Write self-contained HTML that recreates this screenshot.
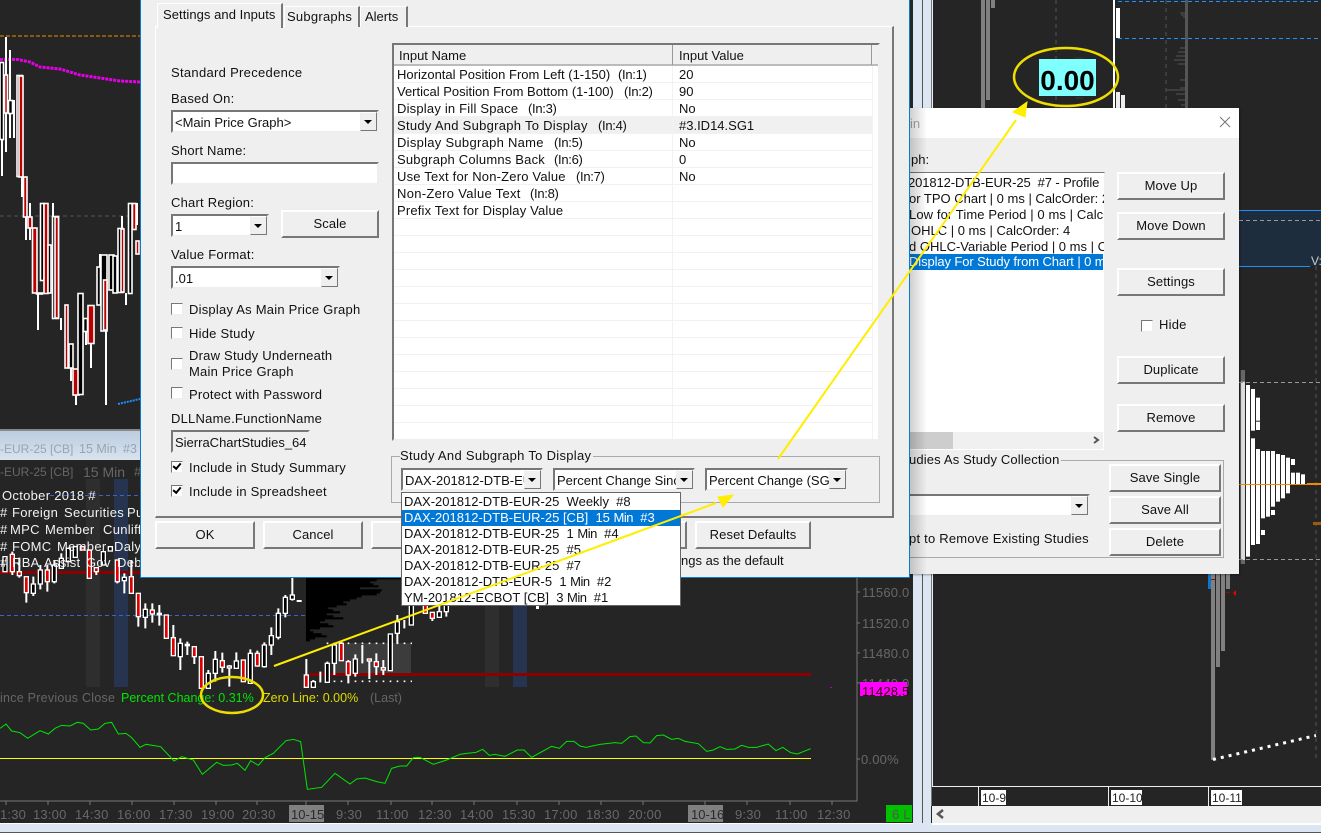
<!DOCTYPE html>
<html><head><meta charset="utf-8"><style>
html,body{margin:0;padding:0;width:1321px;height:833px;overflow:hidden;background:#252525}
body{position:relative;font:13px/16px "Liberation Sans",sans-serif;color:#111}
.a{position:absolute}
.t{position:absolute;white-space:pre;line-height:16px;margin-top:1px}
.s{letter-spacing:.22px}
.n{letter-spacing:-.3px}
svg{position:absolute;left:0;top:0}
.d{background:#efefef}
.b{position:absolute;box-sizing:border-box;background:#efefef;border:2px solid;border-color:#fff #777 #777 #fff;text-align:center;line-height:24px;white-space:pre;letter-spacing:.1px}
.c{position:absolute;box-sizing:border-box;background:#fff;border:2px solid;border-color:#777 #eee #eee #777;line-height:21px;padding-left:2px;white-space:pre;overflow:hidden}
.ar{position:absolute;right:0;top:0;bottom:0;width:17px;box-sizing:border-box;background:#efefef;border:1px solid;border-color:#fff #777 #777 #eee}
.ar:after{content:"";position:absolute;left:3px;top:7px;border:4px solid transparent;border-top:4px solid #000;border-bottom:0}
.k{position:absolute;box-sizing:border-box;width:12px;height:12px;background:#fff;border:1px solid;border-color:#777 #eee #eee #777;left:171px}
.k.on:after{content:"";position:absolute;left:1px;top:1px;width:6px;height:3px;border:solid #000;border-width:0 0 2px 2px;transform:rotate(-50deg)}
.l{position:absolute;white-space:pre;color:#686868;font-size:13px;line-height:16px;letter-spacing:.2px;margin-top:1px}
.ch{position:absolute;white-space:pre;color:#f2f2f2;font-size:13px;line-height:16px;letter-spacing:.3px}
.it{position:absolute;left:2px;white-space:pre;line-height:16px}
.m{letter-spacing:-.5px}
.h{position:absolute;white-space:pre;line-height:16px;font-size:12.5px;margin-top:1px}
</style></head><body>

<svg width="1321" height="833" viewBox="0 0 1321 833">
<!-- frames -->
<rect x="913" y="0" width="9" height="833" fill="#dbe6f2"/>
<rect x="922" y="0" width="1" height="833" fill="#555"/>
<rect x="923" y="0" width="8" height="833" fill="#dbe6f2"/>
<rect x="931" y="0" width="1" height="806" fill="#777"/>
<rect x="932" y="0" width="1" height="786" fill="#eee"/>
<rect x="0" y="823" width="1321" height="9" fill="#dbe6f2"/>
<rect x="0" y="823" width="913" height="1" fill="#fff"/>
<rect x="0" y="832" width="1321" height="1" fill="#555"/>
<rect x="932" y="806" width="389" height="17" fill="#efefef"/>
<rect x="932" y="823" width="389" height="2" fill="#fff"/>
<path d="M943 810l-5 4 5 4" fill="none" stroke="#555" stroke-width="2.500"/>

<!-- upper chart -->
<path d="M0 36H140" stroke="#f28a00" stroke-dasharray="4 2"/>
<path d="M0 216H140" stroke="#555" stroke-dasharray="4 3"/>
<path d="M0 59.5H18L30 62 40 67 60 69 80 75 100 78 120 81 140 82" fill="none" stroke="#e600e6" stroke-width="3" stroke-dasharray="3 1"/>
<path d="M118 404L140 399" stroke="#1e90ff" stroke-width="2" stroke-dasharray="2 1"/>
<g fill="none" stroke="#fff" stroke-width="1.6">
<path d="M2 140V176M6 37V75M6 113V152M10 50V100M10 113V138M14 100V138M22 177V197M26 217V240M30 203V217M30 228V240M53 203V216M38 293V330M61 318V330M71 368V381M76 395V405M86 331V345M91 343V368M106 331V405M100 254V267M122 216V256M126 293V305M137 203V225" stroke-width="2"/>
<rect x="0" y="62.5" width="3.5" height="77" fill="#000"/>
<rect x="4.5" y="75" width="3" height="38" fill="#b00"/>
<rect x="8.5" y="100.5" width="4" height="13" fill="#000"/>
<rect x="17" y="75.5" width="5.500" height="101" fill="#000"/>
<rect x="19" y="76" width="4" height="101" fill="#b00"/>
<rect x="23.500" y="177" width="3.500" height="40" fill="#b00"/>
<rect x="28" y="217" width="4" height="11" fill="#b00"/>
<rect x="32.500" y="228" width="4.500" height="65" fill="#b00"/>
<rect x="36.500" y="293" width="6" height="1" fill="#000"/>
<rect x="40.500" y="203.500" width="3.500" height="77" fill="#000"/>
<rect x="44" y="203.500" width="4" height="90" fill="#b00"/>
<rect x="48" y="245" width="3" height="48" fill="#000"/>
<rect x="52.500" y="216.500" width="6" height="102" fill="#000"/>
<rect x="55" y="217" width="3.500" height="101" fill="#b00"/>
<rect x="65" y="305" width="3" height="63" fill="#b00"/>
<rect x="69" y="344" width="4" height="24" fill="#000"/>
<rect x="73" y="369" width="6" height="26" fill="#b00"/>
<rect x="78" y="293.500" width="5" height="101" fill="#000"/>
<rect x="83.500" y="318.500" width="4" height="13" fill="#000"/>
<rect x="88" y="305.500" width="6" height="38" fill="#b00"/>
<rect x="97" y="267" width="3.500" height="38" fill="#000"/>
<rect x="101" y="255" width="6" height="76" fill="#000"/>
<rect x="103.500" y="280" width="3.500" height="50" fill="#b00"/>
<rect x="109" y="255" width="5" height="35" fill="#000"/>
<rect x="113" y="256" width="4" height="37" fill="#000"/>
<rect x="118" y="228.500" width="5" height="64" fill="#000"/>
<rect x="121" y="229" width="3" height="63" fill="#b00"/>
<rect x="128.500" y="203.500" width="3.500" height="90" fill="#000"/>
<rect x="132.500" y="203.500" width="3.500" height="26" fill="#b00"/>
<rect x="136" y="241" width="3" height="13" fill="#b00"/>
</g>

<!-- title strip -->
<defs><linearGradient id="tb" x1="0" y1="0" x2="0" y2="1"><stop offset="0" stop-color="#bccddf"/><stop offset=".5" stop-color="#c9d8e8"/><stop offset="1" stop-color="#d8e3ee"/></linearGradient>
<linearGradient id="sh" x1="0" y1="0" x2="1" y2="0"><stop offset="0" stop-color="#000" stop-opacity=".2"/><stop offset="1" stop-color="#000" stop-opacity="0"/></linearGradient></defs>
<rect x="0" y="429" width="140" height="2" fill="#888"/>
<rect x="0" y="431" width="140" height="29" fill="url(#tb)"/>

<!-- lower chart bands -->
<rect x="86" y="479" width="14" height="208" fill="#2e2e2e"/>
<rect x="114" y="479" width="14" height="208" fill="#26344f"/>
<rect x="485" y="600" width="14" height="87" fill="#2e2e2e"/>
<rect x="513" y="600" width="14" height="87" fill="#26344f"/>
<rect x="333" y="643" width="78" height="30" fill="#3c3c3c"/>
<rect x="536" y="606" width="3" height="3" fill="#fff"/>
<path d="M50 495.500H140" stroke="#3c64c8" stroke-dasharray="4 3"/>
<path d="M0 615.500H306" stroke="#3c64c8" stroke-dasharray="4 3"/>
<path d="M0 572.500H140" stroke="#8b0000" stroke-width="3"/>
<path d="M310 674.500H811" stroke="#8b0000" stroke-width="3"/>
<path d="M0 758.500H811" stroke="#ff0" stroke-width="1"/>

<!-- axes -->
<path d="M0 801H857V0" fill="none" stroke="#777" stroke-width="1"/>
<path d="M857 592h3M857 623h3M857 653h3M857 683h3M857 759h3M6 801v4M48 801v4M90 801v4M132 801v4M174 801v4M216 801v4M257 801v4M306 801v4M348 801v4M391 801v4M432 801v4M474 801v4M517 801v4M559 801v4M601 801v4M643 801v4M705 801v4M747 801v4M790 801v4M832 801v4" stroke="#777"/>
<rect x="289" y="805" width="35" height="17" fill="#808080"/>
<rect x="688" y="805" width="35" height="17" fill="#808080"/>
<rect x="886" y="805" width="26" height="17" fill="#00c000"/>
<rect x="830" y="687" width="2" height="1" fill="#b000b0"/>

<!-- lower chart in zoom units -->
<g transform="translate(0 560) scale(.33333)">
<path stroke="#000" stroke-width="6.500" fill="none" d="M918 55H1205M918 61H1130M918 67H1110M918 73H1120M918 79H1135M918 85H1080M918 91H1145M918 97H1140M918 103H1130M918 109H1085M918 115H1070M918 121H1050M918 127H1030M918 133H1040M918 139H1010M918 145H985M918 151H1000M918 157H1020M918 163H980M918 169H1000M918 175H1030M918 181H975M918 187H960M918 193H985M918 199H1000M918 205H960M918 211H930M918 217H940M918 223H965M918 229H980M918 235H945M918 241H930"/>
<path d="M980 250H1236M980 364H1236" stroke="#fff" stroke-width="5" stroke-dasharray="5 16"/>
<path fill="none" stroke="#00e600" stroke-width="3" d="M0 505L18 492 35 513 60 518 83 535 120 512 145 522 165 505 185 496 210 498 232 487 250 490 272 510 295 507 315 490 335 487 355 522 378 520 395 533 420 562 438 553 482 560 522 603 545 590 580 600 607 643 650 607 670 616 695 615 712 610 735 631 752 602 775 616 795 593 820 580 858 542 880 538 902 545 922 688 965 682 1005 640 1050 672 1070 657 1095 654 1130 665 1155 670 1175 625 1200 618 1220 618 1240 593 1260 592 1300 613 1340 600 1380 583 1400 580 1428 577 1448 568 1468 586 1485 583 1515 589 1552 570 1572 570 1595 592 1655 559 1678 565 1700 544 1722 544 1740 558 1758 562 1800 553 1845 548 1865 550 1890 530 1908 528 1930 548 1950 549 1970 527 1990 525 2015 538 2035 535 2055 544 2095 551 2120 574 2140 570 2160 560 2180 568 2205 567 2225 556 2245 562 2270 562 2305 552 2328 572 2348 562 2372 578 2392 582 2432 566"/>
<path stroke="#fff" stroke-width="6" fill="none" d="M79 98V128M100 50V108M121 15V88M142 15V95M163 0V70M352 0V70M373 40V100M394 0V100M415 170V200M436 130V205M457 130V188M478 135V197M520 195V287M541 235V330M562 245V285M583 290V312M625 330V385M646 273V365M667 278V338M688 315V380M709 277V325M751 268V370M772 272V320M793 247V323M814 202V285M835 145V238M856 105V172M877 50V122M890 123H905M919 297V382M940 360V382M961 335V367M982 305V367M1003 250V345M1024 245V302M1045 300V370M1066 283V350M1087 255V310M1108 295V357M1129 280V345M1150 300V345M1171 222V332M1192 165V250M1213 180V205M1234 130V195M1297 157V183M1318 130V172M1339 135V170M15 -10V35M37 -25V45M58 -7V53M184 -20V25M205 -35V5M247 -40V-30M268 -30V55M289 23V45M310 -25V15M331 -40V-27"/>
<g stroke="#fff" stroke-width="4">
<g fill="#000">
<rect x="94" y="72" width="12" height="28"/><rect x="115" y="30" width="12" height="42"/><rect x="157" y="15" width="12" height="50"/><rect x="367" y="52" width="12" height="10"/><rect x="430" y="148" width="12" height="24"/><rect x="535" y="250" width="12" height="40"/><rect x="619" y="340" width="12" height="45"/><rect x="640" y="298" width="12" height="42"/><rect x="703" y="303" width="12" height="22"/><rect x="745" y="280" width="12" height="90"/><rect x="787" y="255" width="12" height="65"/><rect x="808" y="227" width="12" height="28"/><rect x="829" y="160" width="12" height="72"/><rect x="850" y="112" width="12" height="48"/><rect x="871" y="105" width="12" height="13"/><rect x="934" y="365" width="12" height="17"/><rect x="976" y="310" width="12" height="57"/><rect x="997" y="255" width="12" height="55"/><rect x="1060" y="297" width="12" height="43"/><rect x="1165" y="222" width="12" height="110"/><rect x="1186" y="185" width="12" height="35"/><rect x="1228" y="130" width="12" height="65"/><rect x="1312" y="155" width="12" height="17"/><rect x="1333" y="135" width="12" height="20"/><rect x="9" y="-10" width="12" height="45"/><rect x="178" y="-5" width="12" height="30"/><rect x="199" y="-35" width="12" height="40"/><rect x="220" y="-40" width="12" height="32"/><rect x="304" y="-25" width="12" height="40"/><rect x="325" y="-40" width="12" height="13"/>
</g>
<g fill="#e00000">
<rect x="73" y="50" width="12" height="48"/><rect x="136" y="30" width="12" height="35"/><rect x="346" y="0" width="12" height="65"/><rect x="388" y="50" width="12" height="50"/><rect x="409" y="100" width="12" height="70"/><rect x="451" y="150" width="12" height="12"/><rect x="472" y="160" width="12" height="4"/><rect x="493" y="165" width="12" height="70"/><rect x="514" y="233" width="12" height="54"/><rect x="556" y="253" width="12" height="4"/><rect x="577" y="260" width="12" height="30"/><rect x="598" y="290" width="12" height="95"/><rect x="661" y="302" width="12" height="20"/><rect x="682" y="318" width="12" height="6"/><rect x="724" y="300" width="12" height="65"/><rect x="766" y="280" width="12" height="38"/><rect x="913" y="345" width="12" height="37"/><rect x="1018" y="250" width="12" height="52"/><rect x="1039" y="305" width="12" height="40"/><rect x="1102" y="297" width="12" height="6"/><rect x="1123" y="305" width="12" height="15"/><rect x="1144" y="323" width="12" height="7"/><rect x="1270" y="130" width="12" height="30"/><rect x="1291" y="157" width="12" height="18"/><rect x="31" y="-17" width="12" height="52"/><rect x="52" y="35" width="12" height="12"/><rect x="241" y="-40" width="12" height="10"/><rect x="262" y="-30" width="12" height="85"/><rect x="283" y="23" width="12" height="12"/>
</g></g>
</g>

<!-- right chart -->
<path d="M1118 1.500H1321M1118 38.500H1321" stroke="#1e90ff" stroke-width="1" stroke-dasharray="4 3"/>
<path d="M1056 0V108M1166 0V108M1316 266V760" stroke="#555" stroke-dasharray="4 4"/>
<rect x="981" y="0" width="4" height="108" fill="#808080"/>
<rect x="986" y="0" width="4" height="100" fill="#808080"/>
<rect x="991" y="0" width="4" height="8" fill="#808080"/>
<rect x="1113" y="0" width="2" height="108" fill="#fff"/>
<rect x="1116" y="8" width="4" height="30" fill="#fff"/>
<rect x="1116" y="92" width="4" height="16" fill="#eee"/>
<rect x="1121" y="95" width="4" height="13" fill="#eee"/>
<rect x="1185" y="0" width="3" height="108" fill="#555"/>
<path d="M1180 13h5M1181 15h4M1183 17h2M1180 48h5M1178 52h7M1176 56h9M1174 60h11M1178 64h7M1180 80h5M1180 88h5M1167 90h18M1176 94h9M1178 100h7M1181 105h4" stroke="#555"/>
<path d="M1078 50h6M1075 58h8M1073 70h10M1070 90h14M1076 98h7" stroke="#383838"/>
<rect x="1239" y="210" width="82" height="56" fill="#1e2d3d"/>
<path d="M1239 210.500H1321M1239 266.500H1310" stroke="#1e90ff"/>
<path d="M1239 220.500H1321" stroke="#999" stroke-dasharray="4 3"/>
<g transform="translate(900 280) scale(.33333)" fill="#fff">
<rect x="1022" y="270" width="13" height="35" fill="#666"/><rect x="1022" y="305" width="13" height="535" fill="#ddd"/><rect x="1022" y="840" width="13" height="12" fill="#666"/>
<rect x="1038" y="315" width="12" height="515"/><rect x="1053" y="327" width="12" height="125"/><rect x="1053" y="475" width="12" height="320"/>
<rect x="1068" y="353" width="12" height="69"/><rect x="1068" y="425" width="12" height="25"/><rect x="1068" y="507" width="12" height="263"/><rect x="1068" y="767" width="12" height="25"/>
<rect x="1083" y="513" width="12" height="202"/><rect x="1083" y="750" width="12" height="15"/><rect x="1098" y="513" width="12" height="197"/>
<rect x="1113" y="513" width="12" height="167"/><rect x="1113" y="690" width="12" height="15"/><rect x="1128" y="522" width="12" height="143"/>
<rect x="1143" y="525" width="12" height="130"/><rect x="1158" y="533" width="12" height="107"/><rect x="1173" y="537" width="12" height="18"/><rect x="1173" y="578" width="12" height="37"/>
<rect x="1188" y="578" width="12" height="37"/><rect x="1203" y="583" width="12" height="29"/>
</g>
<path d="M1239 484.500H1307" stroke="#f28a00"/>
<path d="M1307 484H1321" stroke="#f28a00" stroke-width="2"/>
<path d="M1313 523.500H1321" stroke="#9a5a10" stroke-width="3"/>
<path d="M1239 382.500H1321M1239 559.500H1321" stroke="#999" stroke-dasharray="4 3"/>
<rect x="1208" y="574" width="3" height="15" fill="#0a78c8"/>
<rect x="1211" y="574" width="4" height="186" fill="#808080"/>
<rect x="1216" y="574" width="4" height="93" fill="#808080"/>
<rect x="1221" y="574" width="4" height="77" fill="#808080"/>
<rect x="1226" y="574" width="4" height="15" fill="#808080"/>
<path d="M1226 592.500h4M1211 579.500h4" stroke="#a00" stroke-width="1"/>
<path d="M1236 590v6l-3-3z" fill="#e00"/>
<path d="M1213 759.500L1316 735.500" stroke="#fff" stroke-width="3" stroke-dasharray="3 5"/>
<path d="M932 786.500H1321" stroke="#eee"/>
<path d="M978.500 786V806M1108.500 786V806M1208.500 786V806" stroke="#eee"/>
<rect x="981" y="790" width="25" height="15" fill="#fff"/>
<rect x="1111" y="790" width="31" height="15" fill="#fff"/>
<rect x="1211" y="790" width="31" height="15" fill="#fff"/>
</svg>

<!-- chart texts -->
<div class="t" style="left:0;top:440px;font-size:12px;color:#98a4b0">-EUR-25 [CB]</div>
<div class="t" style="left:79px;top:440px;font-size:12.500px;color:#98a4b0">15 Min</div>
<div class="t" style="left:123px;top:440px;font-size:12.500px;color:#98a4b0">#3</div>
<div class="t" style="left:0;top:463px;font-size:12px;color:#666">-EUR-25 [CB]</div>
<div class="t" style="left:83px;top:463px;font-size:14px;color:#666">15 Min</div>
<div class="t" style="left:134px;top:463px;font-size:13px;color:#666">#</div>
<div class="ch" style="left:2px;top:488px">October 2018 #</div>
<div class="ch" style="left:0;top:505px">#</div><div class="ch" style="left:12px;top:505px">Foreign</div><div class="ch" style="left:64px;top:505px">Securities</div><div class="ch" style="left:127px;top:505px">Pu</div>
<div class="ch" style="left:0;top:522px">#</div><div class="ch" style="left:10px;top:522px">MPC</div><div class="ch" style="left:45px;top:522px">Member</div><div class="ch" style="left:103px;top:522px">Cunliff</div>
<div class="ch" style="left:0;top:539px">#</div><div class="ch" style="left:12px;top:539px">FOMC</div><div class="ch" style="left:57px;top:539px">Member</div><div class="ch" style="left:114px;top:539px">Daly</div>
<div class="ch" style="left:0;top:555px">#</div><div class="ch" style="left:12px;top:555px">RBA</div><div class="ch" style="left:44px;top:555px">Assist</div><div class="ch" style="left:86px;top:555px">Gov</div><div class="ch" style="left:117px;top:555px">Deb</div>
<div class="h" style="left:0;top:689px;color:#666;letter-spacing:.25px">ince Previous Close</div>
<div class="h" style="left:121px;top:689px;color:#00e600">Percent Change: 0.31%</div>
<div class="h" style="left:263px;top:689px;color:#dcdc00">Zero Line: 0.00%</div>
<div class="h" style="left:370px;top:689px;color:#666">(Last)</div>
<div class="l" style="left:862px;top:584px">11560.0</div>
<div class="l" style="left:862px;top:615px">11520.0</div>
<div class="l" style="left:862px;top:645px">11480.0</div>
<div class="l" style="left:862px;top:675px">11440.0</div>
<div class="a" style="left:860px;top:682px;width:47px;height:14px;background:#ff00ff"></div>
<div class="l" style="left:862px;top:683px;color:#300">11428.5</div>
<div class="l" style="left:861px;top:751px">0.00%</div>
<div class="l" style="left:0;top:806px">1:30</div>
<div class="l" style="left:33px;top:806px">13:00</div>
<div class="l" style="left:75px;top:806px">14:30</div>
<div class="l" style="left:117px;top:806px">16:00</div>
<div class="l" style="left:159px;top:806px">17:30</div>
<div class="l" style="left:201px;top:806px">19:00</div>
<div class="l" style="left:242px;top:806px">20:30</div>
<div class="l" style="left:291px;top:806px;color:#2a2a2a;letter-spacing:0">10-15</div>
<div class="l" style="left:336px;top:806px">9:30</div>
<div class="l" style="left:376px;top:806px">11:00</div>
<div class="l" style="left:418px;top:806px">12:30</div>
<div class="l" style="left:460px;top:806px">14:00</div>
<div class="l" style="left:502px;top:806px">15:30</div>
<div class="l" style="left:544px;top:806px">17:00</div>
<div class="l" style="left:586px;top:806px">18:30</div>
<div class="l" style="left:628px;top:806px">20:00</div>
<div class="l" style="left:691px;top:806px;color:#2a2a2a;letter-spacing:0">10-16</div>
<div class="l" style="left:735px;top:806px">9:30</div>
<div class="l" style="left:775px;top:806px">11:00</div>
<div class="l" style="left:817px;top:806px">12:30</div>
<div class="l" style="left:892px;top:806px;color:#555">6 L</div>
<div class="t" style="left:982px;top:789px;font-size:12px;color:#222">10-9</div>
<div class="t" style="left:1112px;top:789px;font-size:12px;color:#222">10-10</div>
<div class="t" style="left:1212px;top:789px;font-size:12px;color:#222">10-11</div>
<div class="t" style="left:1311px;top:252px;font-size:12px;color:#ccc">V:</div>
<div class="a" style="left:1039px;top:59px;width:57px;height:37px;background:#80ffff;color:#000;font:bold 28px/43px 'Liberation Sans',sans-serif;text-align:center">0.00</div>

<!-- second dialog -->
<div class="a d" style="left:909px;top:108px;width:330px;height:466px;box-shadow:1px 1px 2px rgba(0,0,0,.35)">
  <div class="a" style="left:0;top:0;width:330px;height:30px;background:#fff"></div>
  <div class="t" style="left:1px;top:7px;color:#aaa">in</div>
  <svg style="left:310px;top:8px" width="12" height="12"><path d="M1 1L11 11M11 1L1 11" stroke="#777" fill="none"/></svg>
  <div class="t" style="left:2px;top:43px">ph:</div>
  <div class="a" style="left:0;top:64px;width:195px;height:276px;background:#fff;border-top:1px solid #777;border-right:1px solid #eee;border-bottom:1px solid #fff;overflow:hidden">
    <div class="a" style="left:0;top:81px;width:194px;height:16px;background:#0078d7"></div>
    <div class="t" style="left:-1px;top:1px;letter-spacing:-.1px">201812-DTB-EUR-25  #7 - Profile</div>
    <div class="t" style="left:0;top:17px">or TPO Chart | 0 ms | CalcOrder: 2</div>
    <div class="t" style="left:0;top:33px;letter-spacing:.1px">Low for Time Period | 0 ms | CalcO</div>
    <div class="t" style="left:2px;top:49px">OHLC | 0 ms | CalcOrder: 4</div>
    <div class="t" style="left:0;top:65px">d OHLC-Variable Period | 0 ms | C</div>
    <div class="t" style="left:0;top:80px;color:#fff;letter-spacing:-.1px">Display For Study from Chart | 0 ms</div>
    <div class="a" style="left:0;top:259px;width:194px;height:17px;background:#f0f0f0"></div>
    <div class="a" style="left:0;top:259px;width:44px;height:17px;background:#cdcdcd"></div>
    <svg style="left:183px;top:262px" width="10" height="10"><path d="M2 2l4 3-4 3" fill="none" stroke="#555" stroke-width="2"/></svg>
  </div>
  <div class="b" style="left:208px;top:64px;width:108px;height:28px">Move Up</div>
  <div class="b" style="left:208px;top:104px;width:108px;height:28px">Move Down</div>
  <div class="b" style="left:208px;top:160px;width:108px;height:28px">Settings</div>
  <div class="k" style="left:232px;top:212px"></div>
  <div class="t s" style="left:250px;top:208px">Hide</div>
  <div class="b" style="left:208px;top:248px;width:108px;height:28px">Duplicate</div>
  <div class="b" style="left:208px;top:296px;width:108px;height:28px">Remove</div>
  <div class="a" style="left:0;top:352px;width:315px;height:98px;box-sizing:border-box;border:1px solid #aaa;border-left:0"></div>
  <div class="t" style="left:0;top:343px;background:#efefef;padding-right:2px;letter-spacing:.15px">udies As Study Collection</div>
  <div class="c" style="left:0;top:386px;width:181px;height:23px;border-left:0"><div class="ar"></div></div>
  <div class="t s" style="left:0;top:422px">pt to Remove Existing Studies</div>
  <div class="b" style="left:200px;top:356px;width:112px;height:28px">Save Single</div>
  <div class="b" style="left:200px;top:388px;width:112px;height:28px">Save All</div>
  <div class="b" style="left:200px;top:420px;width:112px;height:28px">Delete</div>
</div>
<svg style="left:909px;top:108px" width="18" height="466"><rect width="18" height="466" fill="url(#sh)"/></svg>

<!-- main dialog -->
<div class="a d" style="left:140px;top:0;width:770px;height:578px;box-sizing:border-box;border:1px solid #0a7ad0;border-top:0">
  <div class="a" style="left:14px;top:26px;width:739px;height:492px;box-sizing:border-box;border-top:1px solid #fff;border-left:1px solid #fff;border-right:2px solid #777;border-bottom:2px solid #777"></div>
  <div class="a d" style="left:16px;top:3px;width:126px;height:25px;box-sizing:border-box;border:1px solid #fff;border-right:2px solid #777;border-bottom:0"></div>
  <div class="a d" style="left:143px;top:6px;width:76px;height:21px;box-sizing:border-box;border:1px solid #fff;border-right:2px solid #777;border-bottom:0"></div>
  <div class="a d" style="left:219px;top:6px;width:48px;height:21px;box-sizing:border-box;border:1px solid #fff;border-right:2px solid #777;border-bottom:0"></div>
  <div class="t" style="left:22px;top:6px;letter-spacing:.06px">Settings and Inputs</div>
  <div class="t" style="left:146px;top:8px;letter-spacing:.25px">Subgraphs</div>
  <div class="t" style="left:224px;top:8px">Alerts</div>

  <div class="t s" style="left:30px;top:64px;letter-spacing:.3px">Standard Precedence</div>
  <div class="t s" style="left:30px;top:90px">Based On:</div>
  <div class="c" style="left:30px;top:110px;width:208px;height:23px">&lt;Main Price Graph&gt;<div class="ar"></div></div>
  <div class="t s" style="left:30px;top:142px">Short Name:</div>
  <div class="c" style="left:30px;top:162px;width:208px;height:23px"></div>
  <div class="t s" style="left:30px;top:194px">Chart Region:</div>
  <div class="c" style="left:30px;top:214px;width:98px;height:23px">1<div class="ar"></div></div>
  <div class="b" style="left:140px;top:210px;width:98px;height:28px">Scale</div>
  <div class="t s" style="left:30px;top:246px">Value Format:</div>
  <div class="c" style="left:30px;top:266px;width:169px;height:23px">.01<div class="ar"></div></div>
  <div class="k" style="left:30px;top:303px"></div><div class="t s" style="left:48px;top:301px">Display As Main Price Graph</div>
  <div class="k" style="left:30px;top:327px"></div><div class="t s" style="left:48px;top:325px">Hide Study</div>
  <div class="k" style="left:30px;top:358px"></div><div class="t s" style="left:48px;top:347px">Draw Study Underneath</div><div class="t s" style="left:48px;top:363px">Main Price Graph</div>
  <div class="k" style="left:30px;top:387px"></div><div class="t s" style="left:48px;top:386px">Protect with Password</div>
  <div class="t s" style="left:30px;top:410px">DLLName.FunctionName</div>
  <div class="c" style="left:30px;top:430px;width:139px;height:23px;background:#efefef">SierraChartStudies_64</div>
  <div class="k on" style="left:30px;top:461px"></div><div class="t s" style="left:48px;top:459px">Include in Study Summary</div>
  <div class="k on" style="left:30px;top:485px"></div><div class="t s" style="left:48px;top:483px">Include in Spreadsheet</div>

  <!-- grid -->
  <div class="a" style="left:251px;top:43px;width:488px;height:398px;box-sizing:border-box;background:#fff;border:2px solid;border-color:#777 #eee #eee #777"></div>
  <div class="a" style="left:253px;top:45px;width:484px;height:19px;background:#efefef;border-bottom:2px solid #bbb"></div>
  <div class="a" style="left:531px;top:45px;width:1px;height:20px;background:#999"></div>
  <div class="a" style="left:730px;top:45px;width:1px;height:20px;background:#999"></div>
  <svg style="left:253px;top:66px" width="484" height="373"><rect x="0" y="50" width="478" height="17" fill="#f0f0f0"/><path d="M0 16.500H478M0 33.500H478M0 50.500H478M0 67.500H478M0 84.500H478M0 101.500H478M0 118.500H478M0 135.500H478M0 152.500H478M0 169.500H478M0 186.500H478M0 203.500H478M0 220.500H478M0 237.500H478M0 254.500H478M0 271.500H478M0 288.500H478M0 305.500H478M0 322.500H478M0 339.500H478M0 356.500H478M278.500 0V373M478.500 0V373" stroke="#f2f2f2"/></svg>
  <div class="t" style="left:258px;top:47px">Input Name</div>
  <div class="t" style="left:538px;top:47px">Input Value</div>
  <div class="t" style="left:256px;top:66px">Horizontal Position From Left (1-150)</div><div class="t n" style="left:477px;top:66px">(In:1)</div><div class="t" style="left:538px;top:66px">20</div>
  <div class="t" style="left:256px;top:83px">Vertical Position From Bottom (1-100)</div><div class="t n" style="left:483px;top:83px">(In:2)</div><div class="t" style="left:538px;top:83px">90</div>
  <div class="t" style="left:256px;top:100px;letter-spacing:.2px">Display in Fill Space</div><div class="t n" style="left:387px;top:100px">(In:3)</div><div class="t" style="left:538px;top:100px">No</div>
  <div class="t" style="left:256px;top:117px;letter-spacing:.28px">Study And Subgraph To Display</div><div class="t n" style="left:457px;top:117px">(In:4)</div><div class="t" style="left:538px;top:117px">#3.ID14.SG1</div>
  <div class="t" style="left:256px;top:134px;letter-spacing:.28px">Display Subgraph Name</div><div class="t n" style="left:413px;top:134px">(In:5)</div><div class="t" style="left:538px;top:134px">No</div>
  <div class="t" style="left:256px;top:151px;letter-spacing:.2px">Subgraph Columns Back</div><div class="t n" style="left:413px;top:151px">(In:6)</div><div class="t" style="left:538px;top:151px">0</div>
  <div class="t" style="left:256px;top:168px;letter-spacing:.19px">Use Text for Non-Zero Value</div><div class="t n" style="left:435px;top:168px">(In:7)</div><div class="t" style="left:538px;top:168px">No</div>
  <div class="t" style="left:256px;top:185px;letter-spacing:.3px">Non-Zero Value Text</div><div class="t n" style="left:389px;top:185px">(In:8)</div>
  <div class="t" style="left:256px;top:202px;letter-spacing:.17px">Prefix Text for Display Value</div>

  <!-- group -->
  <div class="a" style="left:250px;top:456px;width:489px;height:47px;box-sizing:border-box;border:1px solid #aaa"></div>
  <div class="t" style="left:259px;top:447px;background:#efefef;padding-right:2px;letter-spacing:.3px">Study And Subgraph To Display</div>
  <div class="c" style="left:260px;top:468px;width:142px;height:23px">DAX-201812-DTB-EUR-25<div class="ar"></div></div>
  <div class="c" style="left:412px;top:468px;width:142px;height:23px">Percent Change Since Previous<div class="ar"></div></div>
  <div class="c" style="left:564px;top:468px;width:143px;height:23px">Percent Change (SG1)<div class="ar"></div></div>

  <div class="b" style="left:14px;top:521px;width:100px;height:28px">OK</div>
  <div class="b" style="left:122px;top:521px;width:100px;height:28px">Cancel</div>
  <div class="b" style="left:230px;top:521px;width:316px;height:28px"></div>
  <div class="b" style="left:554px;top:521px;width:116px;height:28px">Reset Defaults</div>
  <div class="t" style="left:540px;top:552px">ngs as the default</div>

  <!-- dropdown -->
  <div class="a" style="left:260px;top:492px;width:280px;height:114px;box-sizing:border-box;background:#fff;border:1px solid #666">
    <div class="a" style="left:0;top:17px;width:278px;height:16px;background:#0078d7"></div>
    <div class="it" style="top:1px">DAX-201812-DTB-EUR-25  Weekly  #8</div>
    <div class="it" style="top:17px;color:#fff">DAX-201812-DTB-EUR-25 [CB]  15 <span class="m">Min</span>  #3</div>
    <div class="it" style="top:33px">DAX-201812-DTB-EUR-25  1 <span class="m">Min</span>  #4</div>
    <div class="it" style="top:49px">DAX-201812-DTB-EUR-25  #5</div>
    <div class="it" style="top:65px">DAX-201812-DTB-EUR-25  #7</div>
    <div class="it" style="top:81px">DAX-201812-DTB-EUR-5  1 <span class="m">Min</span>  #2</div>
    <div class="it" style="top:97px">YM-201812-ECBOT [CB]  3 <span class="m">Min</span>  #1</div>
  </div>
</div>

<!-- annotation overlay -->
<svg width="1321" height="833" viewBox="0 0 1321 833" style="pointer-events:none">
<ellipse cx="232" cy="695" rx="31" ry="18" fill="none" stroke="#eedd00" stroke-width="2.500"/>
<ellipse cx="1066" cy="77" rx="52" ry="29" fill="none" stroke="#eedd00" stroke-width="2.500"/>
<path d="M274 666L716 503" stroke="#ffee00" stroke-width="2"/>
<path d="M733 495L718 497 723 507Z" fill="#ffee00" stroke="#ffee00"/>
<path d="M778 459L1016 120" stroke="#ffee00" stroke-width="2"/>
<path d="M1027 102L1013 112 1025 117Z" fill="#ffee00" stroke="#ffee00"/>
</svg>
</body></html>
